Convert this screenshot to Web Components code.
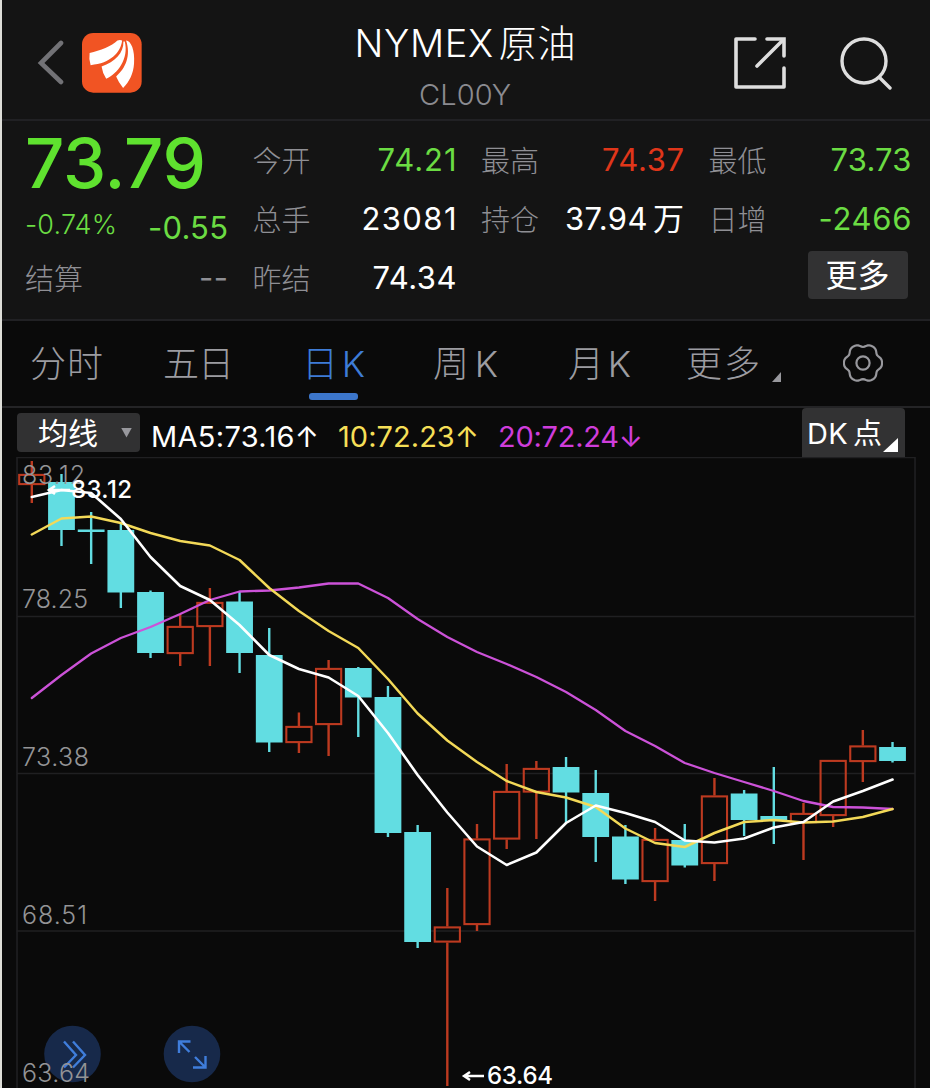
<!DOCTYPE html>
<html lang="zh-CN">
<head>
<meta charset="utf-8">
<title>NYMEX原油</title>
<style>
  body {
    margin: 0;
    background: #0a0a0a;
    font-family: Inter, "Noto Sans CJK SC", sans-serif;
    color: #fff;
  }
</style>
</head>
<body>
<futures-page></futures-page>

<script>
// text set to a fixed width by spreading its letters
class FitText extends HTMLElement {
  constructor() {
    super();
    this.shadowDOM = this.attachShadow({ mode: "open" });
  }

  connectedCallback() {
    this.shadowDOM.innerHTML = `
      <style>
        :host {
          display: block;
          white-space: nowrap;
          line-height: 1.2;
          width: ${this.getAttribute("w")}px;
        }
        span { display: inline-block; }
        ::slotted(b) { font-weight: inherit; margin-left: 5px; }
      </style>
      <span><slot></slot></span>
    `;
    const span = this.shadowDOM.querySelector("span");
    const count = this.textContent.length - 1;
    const rest = Number(this.getAttribute("w")) - span.getBoundingClientRect().width;
    span.style.letterSpacing = rest / count + "px";
  }
}
customElements.define("fit-text", FitText);

class TopBar extends HTMLElement {
  constructor() {
    super();
    this.shadowDOM = this.attachShadow({ mode: "open" });
  }

  connectedCallback() {
    this.shadowDOM.innerHTML = `
      <style>
        :host {
          display: grid;
          grid-template-columns: 320px 1fr 320px;
          height: 119px;
          box-sizing: border-box;
          background: #141414;
        }
        .left { display: flex; align-items: center; gap: 17px; padding: 7px 0 0 35px; }
        .title { display: flex; flex-direction: column; align-items: center; padding: 21px 2px 0 0; }
        .name { font-size: 38px; font-weight: 300; }
        .code { font-size: 29px; font-weight: 300; color: #8b8b90; margin-top: 11px; }
        .right { display: flex; align-items: center; justify-content: flex-end; gap: 51px; padding: 7px 37px 0 0; }
        svg { display: block; }
      </style>
      <div class="left">
        <svg width="28" height="46" viewBox="0 0 28 46"><path d="M24 3 4 23 24 42" fill="none" stroke="#727276" stroke-width="4.6" stroke-linecap="round"/></svg>
        <svg width="60" height="60" viewBox="245 98 181 181">
          <rect x="245" y="98" width="180" height="180" rx="34" fill="#f15423"/>
          <g fill="#fff">
            <path d="M268 158C300 152 335 138 352 121Q360 117 366 121C362 156 332 190 271 195Q265 178 268 158Z"/>
            <path d="M370 124C371 158 345 186 304 199Q307 220 318 236C352 222 387 176 374 124Z"/>
            <path d="M378 121C393 122 405 150 402 190C400 220 388 245 369 264Q355 246 348 229C377 205 393 165 378 121Z"/>
          </g>
        </svg>
      </div>
      <div class="title">
        <fit-text class="name" w="221">NYMEX<b>原油</b></fit-text>
        <fit-text class="code" w="92">CL00Y</fit-text>
      </div>
      <div class="right">
        <svg width="56" height="56" viewBox="0 0 56 56" fill="none" stroke="#dedede" stroke-width="3.6" stroke-linecap="round" stroke-linejoin="round">
          <path d="M23 4H4V52H52V33"/>
          <path d="M35 4H52V21" stroke-linejoin="miter"/>
          <path d="M51 5 25 31"/>
        </svg>
        <svg width="54" height="54" viewBox="0 0 54 54" fill="none" stroke="#dedede" stroke-width="3.4" stroke-linecap="round">
          <circle cx="25" cy="25" r="22"/><path d="M41 42 51 52"/>
        </svg>
      </div>
    `;
  }
}
customElements.define("top-bar", TopBar);

class QuoteItem extends HTMLElement {
  constructor() {
    super();
    this.shadowDOM = this.attachShadow({ mode: "open" });
  }

  connectedCallback() {
    this.shadowDOM.innerHTML = `
      <style>
        :host { display: flex; align-items: center; justify-content: space-between; height: 59px; }
        .label { font-size: 29px; font-weight: 300; color: #8f8f94; }
        .value { font-size: 31px; font-weight: 400; color: ${this.getAttribute("color") || "#fff"}; margin-top: -6px; }
      </style>
      <fit-text class="label" w="58">${this.getAttribute("label")}</fit-text>
      <fit-text class="value" w="${this.getAttribute("w")}">${this.innerHTML}</fit-text>
    `;
  }
}
customElements.define("quote-item", QuoteItem);

class QuotePanel extends HTMLElement {
  constructor() {
    super();
    this.shadowDOM = this.attachShadow({ mode: "open" });
  }

  connectedCallback() {
    this.shadowDOM.innerHTML = `
      <style>
        :host {
          display: grid;
          grid-template-columns: 203px 204px 203px 203px;
          column-gap: 24.5px;
          height: 202px;
          box-sizing: border-box;
          padding: 12px 0 0 23px;
          background: #141414;
          border-top: 2px solid #212124;
          border-bottom: 2px solid #212124;
        }
        .price { font-size: 69px; font-weight: 550; color: #5fe22f; line-height: 60px; height: 62px; }
        .change { display: flex; justify-content: space-between; height: 56px; color: #6bdc43; }
        .percent { font-size: 27px; font-weight: 300; margin-top: 14px; }
        .diff { font-size: 31px; margin-top: 14px; }
        .more {
          width: 100px;
          height: 48px;
          margin: 0 4px 0 auto;
          border-radius: 4px;
          background: #323233;
          display: flex;
          align-items: center;
          justify-content: center;
          font-size: 32px;
        }
        .more fit-text { margin-top: 2px; }
      </style>
      <div>
        <fit-text class="price" w="181">73.79</fit-text>
        <div class="change">
          <fit-text class="percent" w="92">-0.74%</fit-text>
          <fit-text class="diff" w="80">-0.55</fit-text>
        </div>
        <quote-item label="结算" w="29" color="#8f8f94">--</quote-item>
      </div>
      <div>
        <quote-item label="今开" w="79" color="#6bdc43">74.21</quote-item>
        <quote-item label="总手" w="95">23081</quote-item>
        <quote-item label="昨结" w="84">74.34</quote-item>
      </div>
      <div>
        <quote-item label="最高" w="82" color="#e0361a">74.37</quote-item>
        <quote-item label="持仓" w="119">37.94<b>万</b></quote-item>
      </div>
      <div>
        <quote-item label="最低" w="81" color="#6bdc43">73.73</quote-item>
        <quote-item label="日增" w="93" color="#6bdc43">-2466</quote-item>
        <div class="more"><fit-text w="64">更多</fit-text></div>
      </div>
    `;
  }
}
customElements.define("quote-panel", QuotePanel);

class PeriodTabs extends HTMLElement {
  constructor() {
    super();
    this.shadowDOM = this.attachShadow({ mode: "open" });
  }

  gearPath() {
    let d = "";
    for (let a = 0; a < 360; a += 5) {
      const t = a * Math.PI / 180;
      const r = 17.9 + 1.5 * Math.cos(6 * t) - 0.3 * Math.cos(12 * t);
      d += (a ? "L" : "M") + (20 + r * Math.cos(t)).toFixed(2) + " " + (20 + r * Math.sin(t)).toFixed(2);
    }
    return d + "Z";
  }

  connectedCallback() {
    this.shadowDOM.innerHTML = `
      <style>
        :host {
          display: grid;
          grid-template-columns: 133px 141px 129px 135px 118px 156px 1fr;
          height: 87px;
          box-sizing: border-box;
          padding-left: 28px;
          border-bottom: 2px solid #242426;
          font-size: 36px;
          font-weight: 300;
          color: #9c9ca1;
        }
        .tab { padding-top: 22px; }
        .active { color: #3e7cd6; }
        .active fit-text { margin-left: -2px; }
        .active::after {
          content: "";
          display: block;
          width: 49px;
          height: 7px;
          margin: 7px 0 0 5px;
          border-radius: 3px;
          background: #3c76cb;
        }
        .more { display: flex; gap: 12px; }
        .more i {
          width: 9px;
          height: 10px;
          margin-top: 29px;
          background: #98989d;
          clip-path: polygon(100% 0, 100% 100%, 0 100%);
        }
        svg { display: block; margin: 22px 0 0 1px; }
      </style>
      <fit-text class="tab" w="73">分时</fit-text>
      <fit-text class="tab" w="71">五日</fit-text>
      <div class="tab active"><fit-text w="63">日<b>K</b></fit-text></div>
      <fit-text class="tab" w="65">周<b>K</b></fit-text>
      <fit-text class="tab" w="63">月<b>K</b></fit-text>
      <div class="tab more"><fit-text w="74">更多</fit-text><i></i></div>
      <svg width="40" height="40" viewBox="0 0 40 40" fill="none" stroke="#98989d" stroke-width="2.2">
        <path d="${this.gearPath()}"/><circle cx="20" cy="20" r="6.6"/>
      </svg>
    `;
  }
}
customElements.define("period-tabs", PeriodTabs);

class IndicatorBar extends HTMLElement {
  constructor() {
    super();
    this.shadowDOM = this.attachShadow({ mode: "open" });
  }

  connectedCallback() {
    this.shadowDOM.innerHTML = `
      <style>
        :host { display: flex; height: 49px; padding-left: 15px; font-size: 29px; }
        .select {
          display: flex;
          align-items: center;
          width: 123px;
          height: 39px;
          margin: 5px 11px 0 0;
          padding-left: 21px;
          box-sizing: border-box;
          border-radius: 4px;
          background: #313132;
          font-size: 30px;
        }
        .select i {
          width: 11px;
          height: 10px;
          margin-left: 23px;
          background: #98989d;
          clip-path: polygon(0 0, 100% 0, 50% 100%);
        }
        .ma { margin: 12px 19px 0 0; }
        .dk {
          display: flex;
          width: 103px;
          height: 49px;
          margin: 0 25px 0 auto;
          padding: 9px 0 0 5px;
          box-sizing: border-box;
          border-radius: 4px 4px 0 0;
          background: #323233;
          font-size: 29px;
        }
        .dk i {
          width: 15px;
          height: 14px;
          margin: 21px 0 0 1px;
          background: #fff;
          clip-path: polygon(100% 0, 100% 100%, 0 100%);
        }
      </style>
      <div class="select"><fit-text w="60">均线</fit-text><i></i></div>
      <fit-text class="ma" w="168">MA5:73.16↑</fit-text>
      <fit-text class="ma" w="141" style="color: #f5df57">10:72.23↑</fit-text>
      <fit-text class="ma" w="145" style="color: #cf3ddb">20:72.24↓</fit-text>
      <div class="dk"><fit-text w="75">DK<b>点</b></fit-text><i></i></div>
    `;
  }
}
customElements.define("indicator-bar", IndicatorBar);

const UP = "#bd3a20";
const DOWN = "#62dde2";

// direction, high, body top, body bottom, low (plot units)
const CANDLES = [
  ["u", 461, 474, 485, 503], ["d", 474, 482, 530, 546], ["d", 512, 529.5, 532, 564],
  ["d", 523, 530, 592.5, 608], ["d", 590.5, 592, 653, 658], ["u", 614, 626, 654, 666],
  ["u", 588, 602, 627, 666], ["d", 592, 601.5, 653, 673], ["d", 628, 655, 742.5, 752],
  ["u", 712.5, 726, 743, 753], ["u", 660, 668, 725, 756], ["d", 667, 668, 697.5, 737],
  ["d", 686, 697, 833, 837], ["d", 825, 832, 942, 948], ["u", 888, 926.5, 942.5, 1086],
  ["u", 824, 838.5, 925, 931], ["u", 764, 791, 839.5, 849], ["u", 761, 768, 792.5, 839],
  ["d", 757, 767, 792.5, 823], ["d", 770, 793, 837, 862], ["d", 825, 836.5, 879.5, 884],
  ["u", 828, 839, 882, 901], ["d", 824, 840, 865.5, 867.5], ["u", 778, 795.5, 864, 881],
  ["d", 790, 793.5, 820, 836], ["d", 767, 816, 820, 844], ["u", 803, 813, 823, 860],
  ["u", 760, 760, 816, 827], ["u", 730, 745.5, 762, 782], ["d", 742, 747, 761, 762.5]
];

const MA5 = [497, 490, 493, 519, 557, 586, 600, 625, 655, 669, 677.5, 696, 733, 775, 812.5,
  846.5, 865, 852.5, 823, 805.5, 813, 822, 840.5, 842.5, 838.5, 827.5, 822, 801.5, 791, 779.5];
const MA10 = [534.5, 518.5, 516.5, 523, 533, 541, 545.5, 560, 588, 611, 631, 648, 679, 713.5, 740.5,
  762, 781, 792, 797.5, 807, 828.5, 843, 847, 833, 822, 820, 822.5, 821.5, 817, 809];
const MA20 = [698, 675, 653.5, 638, 627, 614, 600, 591.5, 590.5, 587.5, 583.5, 583.5, 598, 619, 637,
  652, 664, 677, 692, 710, 731, 746, 763, 773, 782, 791, 801, 807, 807.5, 809];

class CandleChart extends HTMLElement {
  constructor() {
    super();
    this.shadowDOM = this.attachShadow({ mode: "open" });
  }

  x(i) {
    return 31.8 + i * 29.68;
  }

  candle([dir, high, top, bottom, low], i) {
    const x = this.x(i);
    if (dir === "d") {
      return `<path d="M${x} ${high}V${low}" stroke="${DOWN}" stroke-width="2.4"/>
        <rect x="${x - 13.4}" y="${top}" width="26.8" height="${bottom - top}" fill="${DOWN}"/>`;
    }
    return `<path d="M${x} ${high}V${top}M${x} ${bottom}V${low}" stroke="${UP}" stroke-width="2.4"/>
      <rect x="${x - 12.6}" y="${top + 0.9}" width="25.2" height="${bottom - top - 1.8}" fill="none" stroke="${UP}" stroke-width="2.1"/>`;
  }

  line(values, color, width) {
    const points = values.map((y, i) => this.x(i) + "," + y).join(" ");
    return `<polyline points="${points}" fill="none" stroke="${color}" stroke-width="${width}" stroke-linejoin="round" stroke-linecap="round"/>`;
  }

  connectedCallback() {
    this.shadowDOM.innerHTML = `
      <style>
        :host { display: block; height: 631px; overflow: hidden; }
        svg { display: block; }
        .axis { font-size: 25px; font-weight: 300; fill: #949496; }
        .mark { font-size: 24px; font-weight: 500; fill: #fff; }
      </style>
      <svg width="928" height="631" viewBox="2 457 928 631">
        <path d="M17 1088V457.5H915V1088M17 616.5H915M17 773.5H915M17 931H915" fill="none" stroke="#202022" stroke-width="1.6"/>
        <g>${CANDLES.map((c, i) => this.candle(c, i)).join("")}</g>
        <g class="axis">
          <text x="22" y="484" textLength="63">83.12</text>
          <text x="22" y="607.5" textLength="66">78.25</text>
          <text x="22" y="766" textLength="67">73.38</text>
          <text x="22" y="924" textLength="65">68.51</text>
        </g>
        <g class="mark">
          <path d="M49 490H70M55 486 49 490 55 494" fill="none" stroke="#fff" stroke-width="2.6"/>
          <text x="71" y="498" textLength="61">83.12</text>
          <path d="M464 1076H484M470 1072 464 1076 470 1080" fill="none" stroke="#fff" stroke-width="2.4"/>
          <text x="487" y="1084" textLength="66">63.64</text>
        </g>
        ${this.line(MA20, "#cc52d8", 2.3)}
        ${this.line(MA10, "#f3d958", 2.5)}
        ${this.line(MA5, "#fff", 2.6)}
        <g fill="none" stroke="#3f7ddb" stroke-width="2.4">
          <circle cx="72.5" cy="1054" r="28.3" fill="#17294a" stroke="none"/>
          <path d="M64 1041.5 76 1055 64 1067.5M73 1041.5 85 1055 73 1067.5"/>
          <circle cx="192" cy="1054" r="28.3" fill="#17294a" stroke="none"/>
          <path d="M179 1053V1041.5H190.5M179 1041.5 189.5 1052M205.5 1056V1067.5H193M205.5 1067.5 195 1057"/>
        </g>
        <text class="axis" x="22" y="1082" textLength="68">63.64</text>
      </svg>
    `;
  }
}
customElements.define("candle-chart", CandleChart);

class FuturesPage extends HTMLElement {
  constructor() {
    super();
    this.shadowDOM = this.attachShadow({ mode: "open" });
  }

  connectedCallback() {
    this.shadowDOM.innerHTML = `
      <style>
        :host {
          display: block;
          height: 1088px;
          box-sizing: border-box;
          overflow: hidden;
          border-left: 2px solid #deded8;
        }
      </style>
      <top-bar></top-bar>
      <quote-panel></quote-panel>
      <period-tabs></period-tabs>
      <indicator-bar></indicator-bar>
      <candle-chart></candle-chart>
    `;
  }
}
customElements.define("futures-page", FuturesPage);
</script>
</body>
</html>
